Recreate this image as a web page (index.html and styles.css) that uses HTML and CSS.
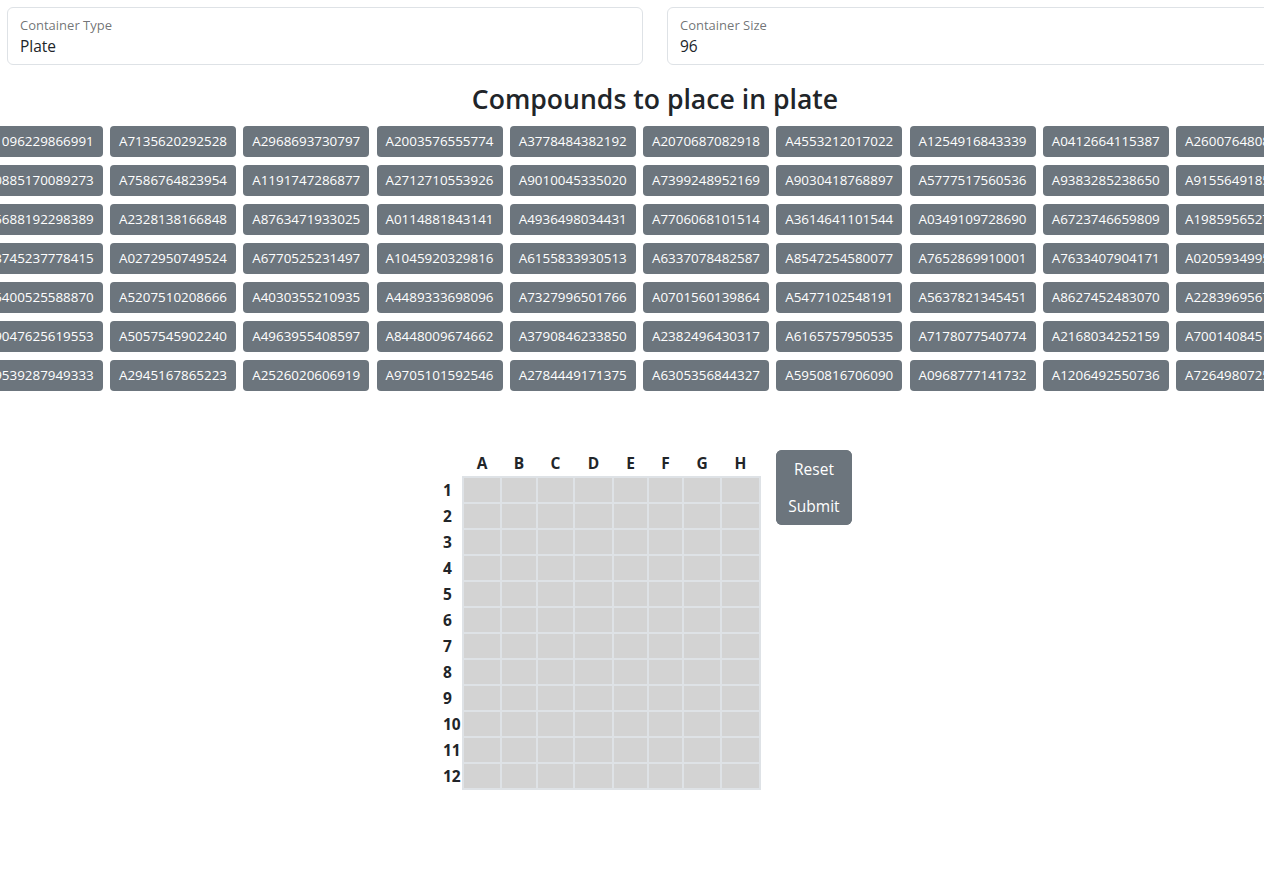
FILE: index.html
```html
<!DOCTYPE html>
<html lang="en">
<head>
<meta charset="utf-8">
<title>Compounds to place in plate</title>
<link rel="stylesheet" href="styles.css">
</head>
<body>
<div class="page">
  <div class="top">
    <div class="field">
      <span class="field-label">Container Type</span>
      <span class="field-value">Plate</span>
    </div>
    <div class="field">
      <span class="field-label">Container Size</span>
      <span class="field-value">96</span>
    </div>
  </div>

  <h3 class="title">Compounds to place in plate</h3>

  <div class="compounds">
    <div class="crow">
      <span class="badge">A1096229866991</span><span class="badge">A7135620292528</span><span class="badge">A2968693730797</span><span class="badge">A2003576555774</span><span class="badge">A3778484382192</span><span class="badge">A2070687082918</span><span class="badge">A4553212017022</span><span class="badge">A1254916843339</span><span class="badge">A0412664115387</span><span class="badge">A2600764808512</span>
    </div>
    <div class="crow">
      <span class="badge">A0885170089273</span><span class="badge">A7586764823954</span><span class="badge">A1191747286877</span><span class="badge">A2712710553926</span><span class="badge">A9010045335020</span><span class="badge">A7399248952169</span><span class="badge">A9030418768897</span><span class="badge">A5777517560536</span><span class="badge">A9383285238650</span><span class="badge">A9155649185274</span>
    </div>
    <div class="crow">
      <span class="badge">A5688192298389</span><span class="badge">A2328138166848</span><span class="badge">A8763471933025</span><span class="badge">A0114881843141</span><span class="badge">A4936498034431</span><span class="badge">A7706068101514</span><span class="badge">A3614641101544</span><span class="badge">A0349109728690</span><span class="badge">A6723746659809</span><span class="badge">A1985956527310</span>
    </div>
    <div class="crow">
      <span class="badge">A3745237778415</span><span class="badge">A0272950749524</span><span class="badge">A6770525231497</span><span class="badge">A1045920329816</span><span class="badge">A6155833930513</span><span class="badge">A6337078482587</span><span class="badge">A8547254580077</span><span class="badge">A7652869910001</span><span class="badge">A7633407904171</span><span class="badge">A0205934995128</span>
    </div>
    <div class="crow">
      <span class="badge">A5400525588870</span><span class="badge">A5207510208666</span><span class="badge">A4030355210935</span><span class="badge">A4489333698096</span><span class="badge">A7327996501766</span><span class="badge">A0701560139864</span><span class="badge">A5477102548191</span><span class="badge">A5637821345451</span><span class="badge">A8627452483070</span><span class="badge">A2283969567402</span>
    </div>
    <div class="crow">
      <span class="badge">A9047625619553</span><span class="badge">A5057545902240</span><span class="badge">A4963955408597</span><span class="badge">A8448009674662</span><span class="badge">A3790846233850</span><span class="badge">A2382496430317</span><span class="badge">A6165757950535</span><span class="badge">A7178077540774</span><span class="badge">A2168034252159</span><span class="badge">A7001408451683</span>
    </div>
    <div class="crow">
      <span class="badge">A9539287949333</span><span class="badge">A2945167865223</span><span class="badge">A2526020606919</span><span class="badge">A9705101592546</span><span class="badge">A2784449171375</span><span class="badge">A6305356844327</span><span class="badge">A5950816706090</span><span class="badge">A0968777141732</span><span class="badge">A1206492550736</span><span class="badge">A7264980725941</span>
    </div>
  </div>

  <div class="board">
    <div class="plate-area">
      <div class="col-heads">
        <span></span><span>A</span><span>B</span><span>C</span><span>D</span><span>E</span><span>F</span><span>G</span><span>H</span>
      </div>
      <div class="plate-body">
        <div class="row-heads">
          <span>1</span><span>2</span><span>3</span><span>4</span><span>5</span><span>6</span><span>7</span><span>8</span><span>9</span><span>10</span><span>11</span><span>12</span>
        </div>
        <div class="plate">
          <div class="well"></div><div class="well"></div><div class="well"></div><div class="well"></div><div class="well"></div><div class="well"></div><div class="well"></div><div class="well"></div>
          <div class="well"></div><div class="well"></div><div class="well"></div><div class="well"></div><div class="well"></div><div class="well"></div><div class="well"></div><div class="well"></div>
          <div class="well"></div><div class="well"></div><div class="well"></div><div class="well"></div><div class="well"></div><div class="well"></div><div class="well"></div><div class="well"></div>
          <div class="well"></div><div class="well"></div><div class="well"></div><div class="well"></div><div class="well"></div><div class="well"></div><div class="well"></div><div class="well"></div>
          <div class="well"></div><div class="well"></div><div class="well"></div><div class="well"></div><div class="well"></div><div class="well"></div><div class="well"></div><div class="well"></div>
          <div class="well"></div><div class="well"></div><div class="well"></div><div class="well"></div><div class="well"></div><div class="well"></div><div class="well"></div><div class="well"></div>
          <div class="well"></div><div class="well"></div><div class="well"></div><div class="well"></div><div class="well"></div><div class="well"></div><div class="well"></div><div class="well"></div>
          <div class="well"></div><div class="well"></div><div class="well"></div><div class="well"></div><div class="well"></div><div class="well"></div><div class="well"></div><div class="well"></div>
          <div class="well"></div><div class="well"></div><div class="well"></div><div class="well"></div><div class="well"></div><div class="well"></div><div class="well"></div><div class="well"></div>
          <div class="well"></div><div class="well"></div><div class="well"></div><div class="well"></div><div class="well"></div><div class="well"></div><div class="well"></div><div class="well"></div>
          <div class="well"></div><div class="well"></div><div class="well"></div><div class="well"></div><div class="well"></div><div class="well"></div><div class="well"></div><div class="well"></div>
          <div class="well"></div><div class="well"></div><div class="well"></div><div class="well"></div><div class="well"></div><div class="well"></div><div class="well"></div><div class="well"></div>
        </div>
      </div>
    </div>
    <div class="btn-group">
      <button class="btn" type="button">Reset</button>
      <button class="btn" type="button">Submit</button>
    </div>
  </div>
</div>
</body>
</html>
```

FILE: styles.css
```css
html, body {
  margin: 0;
  padding: 0;
  overflow: hidden;
  background: #ffffff;
}

body {
  font-family: "Open Sans", "Noto Sans", sans-serif;
  color: #212529;
  font-size: 16px;
}

.page {
  width: 1310px;
}

.top {
  display: flex;
  gap: 24px;
  padding: 7px 0 0 7px;
}

.field {
  flex: 0 0 636px;
  box-sizing: border-box;
  height: 58px;
  border: 1px solid #dee2e6;
  border-radius: 6px;
  padding: 9px 12px 8px;
  display: flex;
  flex-direction: column;
  gap: 3px;
}

.field-label {
  font-size: 13px;
  line-height: 16px;
  color: rgba(33, 37, 41, 0.65);
}

.field-value {
  font-size: 15.5px;
  line-height: 20px;
  color: #212529;
}

.title {
  margin: 17px 0 10px;
  text-align: center;
  font-size: 26.6px;
  line-height: 34px;
  font-weight: 600;
  color: #212529;
}

.compounds {
  margin-left: -23.25px;
  display: flex;
  flex-direction: column;
  gap: 8px;
}

.crow {
  display: flex;
  gap: 7.25px;
}

.badge {
  flex: 0 0 126px;
  box-sizing: border-box;
  height: 31px;
  line-height: 31px;
  text-align: center;
  white-space: nowrap;
  overflow: hidden;
  background: #6c757d;
  color: #ffffff;
  font-size: 13.4px;
  border-radius: 4px;
}

.board {
  margin: 59px 0 0 442px;
  display: flex;
  align-items: flex-start;
  gap: 15px;
}

.plate-area {
  display: flex;
  flex-direction: column;
}

.col-heads {
  display: grid;
  grid-template-columns: 20px 36px 34px 35px 37px 33px 33px 36px 37px;
  column-gap: 2px;
  height: 26px;
  line-height: 26px;
  font-weight: 700;
  font-size: 15.5px;
  text-align: center;
}

.plate-body {
  display: flex;
}

.row-heads {
  width: 20px;
  display: grid;
  grid-template-rows: repeat(12, 24px);
  row-gap: 2px;
  padding-top: 2px;
  font-weight: 700;
  font-size: 15.5px;
  line-height: 24px;
}

.row-heads span {
  padding-left: 1px;
}

.plate {
  display: grid;
  grid-template-columns: 36px 34px 35px 37px 33px 33px 36px 37px;
  grid-template-rows: repeat(12, 24px);
  gap: 2px;
  padding: 2px;
  background: #dee2e6;
}

.well {
  background: #d3d3d3;
}

.btn-group {
  display: flex;
  flex-direction: column;
  width: 76px;
  background: #6c757d;
  border-radius: 6px;
  overflow: hidden;
}

.btn {
  height: 37.5px;
  border: 0;
  margin: 0;
  padding: 0 12px;
  background: #6c757d;
  color: #ffffff;
  font-family: inherit;
  font-size: 15.5px;
  cursor: pointer;
}
```
